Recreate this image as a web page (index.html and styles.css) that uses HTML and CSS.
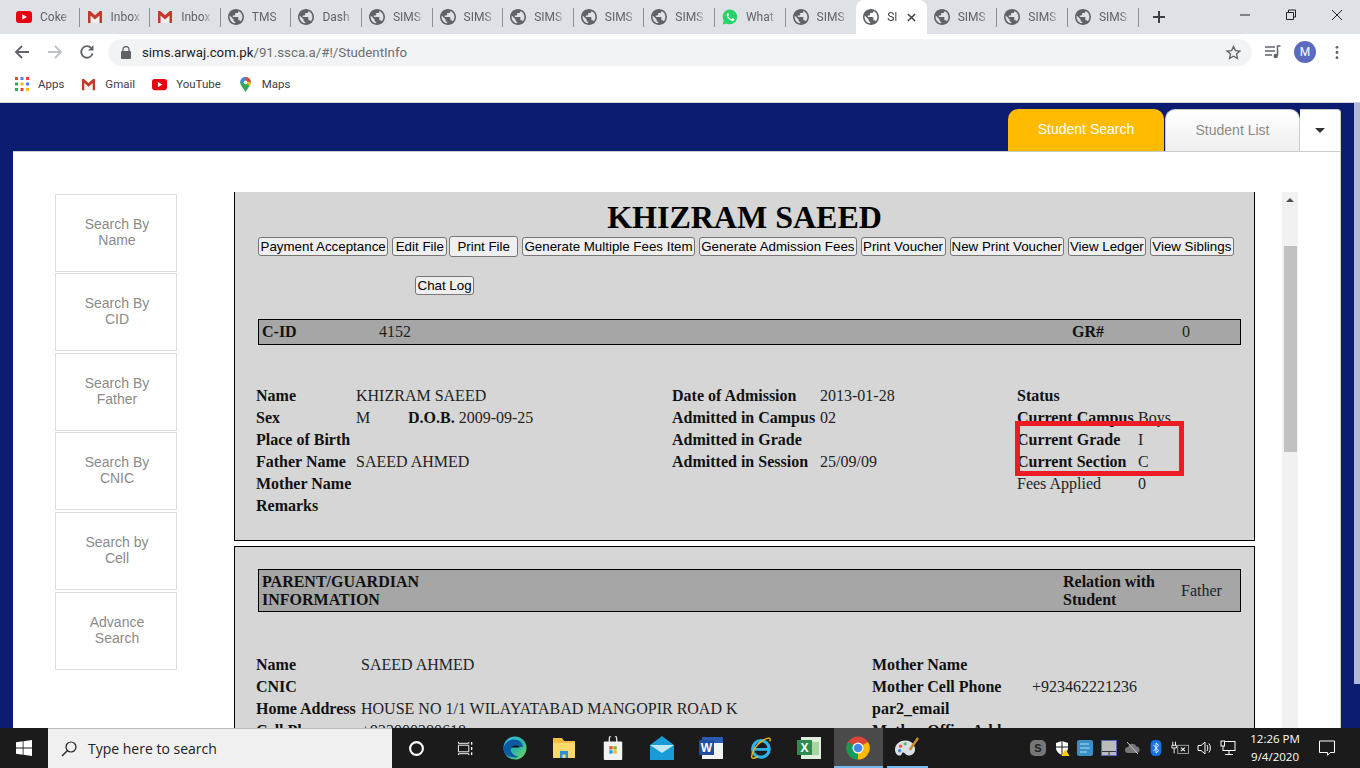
FILE: index.html
```html
<!DOCTYPE html>
<html lang="en">
<head>
<meta charset="utf-8">
<title>SIMS</title>
<link rel="stylesheet" href="styles.css">
</head>
<body>
<svg class="sprite" aria-hidden="true">
  <symbol id="globe" viewBox="2 2 20 20"><path fill="#5f6368" d="M12 2C6.48 2 2 6.48 2 12s4.48 10 10 10 10-4.48 10-10S17.52 2 12 2zm-1 17.93c-3.95-.49-7-3.85-7-7.93 0-.62.08-1.21.21-1.79L9 15v1c0 1.1.9 2 2 2v1.93zm6.9-2.54c-.26-.81-1-1.39-1.9-1.39h-1v-3c0-.55-.45-1-1-1H8v-2h2c.55 0 1-.45 1-1V7h2c1.1 0 2-.9 2-2v-.41c2.93 1.19 5 4.06 5 7.41 0 2.08-.8 3.97-2.1 5.39z"/></symbol>
  <symbol id="yt" viewBox="0 0 16 16"><rect x="0" y="2" width="16" height="12" rx="3" fill="#e60012"/><path d="M6.3 5.2v5.6L11 8z" fill="#fff"/></symbol>
  <symbol id="gmail" viewBox="0 0 16 16"><path d="M3.500 6.800V14h9V6.800L8 10.400z" fill="#f1f1f1"/><path d="M1 2h2.200L8 6.300 12.800 2H15v12h-2.500V6.400L8 10.400 3.500 6.400V14H1z" fill="#c5392b"/></symbol>
  <symbol id="wa" viewBox="0 0 16 16"><path d="M8 .6a7.300 7.300 0 0 0-6.300 11L.7 15.400l3.900-1A7.300 7.300 0 1 0 8 .6z" fill="#25d366"/><path d="M5.700 4c-.8.400-1.300 1.400-1 2.500.6 2.400 2.700 4.700 5.200 5.400 1.200.3 2.100-.3 2.400-1.200l-.1-.7-1.800-.9-.9 1c-1.500-.5-2.700-1.700-3.300-3.200l.8-.9L6.300 4z" fill="#fff"/></symbol>
</svg>

<header class="chrome">
  <div class="tabstrip">
    <div class="tab"><svg class="fav"><use href="#yt"/></svg><span class="tab-title">Coke</span></div>
    <div class="tab"><svg class="fav"><use href="#gmail"/></svg><span class="tab-title">Inbox</span></div>
    <div class="tab"><svg class="fav"><use href="#gmail"/></svg><span class="tab-title">Inbox</span></div>
    <div class="tab"><svg class="fav"><use href="#globe"/></svg><span class="tab-title">TMS</span></div>
    <div class="tab"><svg class="fav"><use href="#globe"/></svg><span class="tab-title">Dash</span></div>
    <div class="tab"><svg class="fav"><use href="#globe"/></svg><span class="tab-title">SIMS</span></div>
    <div class="tab"><svg class="fav"><use href="#globe"/></svg><span class="tab-title">SIMS</span></div>
    <div class="tab"><svg class="fav"><use href="#globe"/></svg><span class="tab-title">SIMS</span></div>
    <div class="tab"><svg class="fav"><use href="#globe"/></svg><span class="tab-title">SIMS</span></div>
    <div class="tab"><svg class="fav"><use href="#globe"/></svg><span class="tab-title">SIMS</span></div>
    <div class="tab"><svg class="fav"><use href="#wa"/></svg><span class="tab-title">What</span></div>
    <div class="tab no-sep"><svg class="fav"><use href="#globe"/></svg><span class="tab-title">SIMS</span></div>
    <div class="tab active"><svg class="fav"><use href="#globe"/></svg><span class="tab-title short">SI</span>
      <svg class="tab-x" viewBox="0 0 10 10"><path d="M1 1l8 8M9 1l-8 8" stroke="#3c4043" stroke-width="1.600"/></svg></div>
    <div class="tab"><svg class="fav"><use href="#globe"/></svg><span class="tab-title">SIMS</span></div>
    <div class="tab"><svg class="fav"><use href="#globe"/></svg><span class="tab-title">SIMS</span></div>
    <div class="tab"><svg class="fav"><use href="#globe"/></svg><span class="tab-title">SIMS</span></div>
    <svg class="newtab" viewBox="0 0 14 14"><path d="M7 1v12M1 7h12" stroke="#3c4043" stroke-width="2"/></svg>
    <div class="winctl">
      <svg viewBox="0 0 12 12"><path d="M1 6h10" stroke="#222" stroke-width="1"/></svg>
      <svg viewBox="0 0 12 12"><path d="M3.500 3V1h7v7H8.500M1.500 3.500h7v7h-7z" fill="none" stroke="#222" stroke-width="1"/></svg>
      <svg viewBox="0 0 12 12"><path d="M1 1l10 10M11 1L1 11" stroke="#222" stroke-width="1"/></svg>
    </div>
  </div>

  <div class="toolbar">
    <svg class="tb" viewBox="0 0 16 16"><path d="M15 8H2.500M8 2L2 8l6 6" fill="none" stroke="#5f6368" stroke-width="1.800"/></svg>
    <svg class="tb" viewBox="0 0 16 16"><path d="M1 8h12.500M8 2l6 6-6 6" fill="none" stroke="#bdc1c6" stroke-width="1.800"/></svg>
    <svg class="tb" viewBox="0 0 16 16"><path d="M13.600 9.500A5.800 5.800 0 1 1 12.300 4" fill="none" stroke="#5f6368" stroke-width="1.800"/><path d="M14.500 1v5.500H9z" fill="#5f6368"/></svg>
    <div class="omnibox">
      <svg class="lock" viewBox="0 0 10 13"><path d="M2 5V3.500a3 3 0 0 1 6 0V5" fill="none" stroke="#5f6368" stroke-width="1.300"/><rect y="5" width="10" height="8" rx="1" fill="#5f6368"/></svg>
      <span class="url"><span class="host">sims.arwaj.com.pk</span>/91.ssca.a/#!/StudentInfo</span>
      <svg class="star" viewBox="0 0 16 16"><path d="M8 1.500l2 4.400 4.800.5-3.600 3.200 1 4.700L8 11.900l-4.200 2.400 1-4.700L1.200 6.400 6 5.900z" fill="none" stroke="#5f6368" stroke-width="1.400"/></svg>
    </div>
    <svg class="media" viewBox="0 0 16 14"><path d="M0 2h10M0 6h10M0 10h7" stroke="#5f6368" stroke-width="1.400"/><path d="M12.500 1v9.500" stroke="#5f6368" stroke-width="1.500"/><path d="M12 1h3.500" stroke="#5f6368" stroke-width="1.500"/><circle cx="10.700" cy="11" r="2.200" fill="#5f6368"/></svg>
    <span class="avatar">M</span>
    <svg class="dots" viewBox="0 0 4 16"><circle cx="2" cy="2.500" r="1.500" fill="#5f6368"/><circle cx="2" cy="8" r="1.500" fill="#5f6368"/><circle cx="2" cy="13.500" r="1.500" fill="#5f6368"/></svg>
  </div>

  <nav class="bookmarks">
    <span class="bm apps-bm">
      <svg class="bm-ic" viewBox="0 0 14 14">
        <rect width="3" height="3" fill="#ea4335"/><rect x="5.500" width="3" height="3" fill="#4285f4"/><rect x="11" width="3" height="3" fill="#ea4335"/>
        <rect y="5.500" width="3" height="3" fill="#34a853"/><rect x="5.500" y="5.500" width="3" height="3" fill="#fbbc04"/><rect x="11" y="5.500" width="3" height="3" fill="#4285f4"/>
        <rect y="11" width="3" height="3" fill="#34a853"/><rect x="5.500" y="11" width="3" height="3" fill="#ea4335"/><rect x="11" y="11" width="3" height="3" fill="#fbbc04"/>
      </svg>Apps</span>
    <span class="bm"><svg class="bm-ic wide"><use href="#gmail"/></svg>Gmail</span>
    <span class="bm"><svg class="bm-ic wide"><use href="#yt"/></svg>YouTube</span>
    <span class="bm"><svg class="bm-ic wide" viewBox="0 0 16 16">
      <path d="M8 0a5.700 5.700 0 0 0-5.700 5.700c0 1.400.5 2.500 1.300 3.600L8 16l4.400-6.700c.8-1.100 1.300-2.200 1.300-3.600A5.700 5.700 0 0 0 8 0z" fill="#34a853"/>
      <path d="M3.600 1.900A5.700 5.700 0 0 1 8 0v4L5 6.700 2.500 5z" fill="#4285f4"/><path d="M8 0a5.700 5.700 0 0 1 5.700 5.700L8 4z" fill="#ea4335"/><path d="M13.700 5.700c0 1.400-.5 2.500-1.300 3.600L10 8V5z" fill="#fbbc04"/><circle cx="8" cy="5.700" r="2" fill="#fff"/></svg>Maps</span>
  </nav>
</header>

<main class="page">
  <div class="tabs">
    <a class="ptab ptab-on">Student Search</a>
    <a class="ptab ptab-off">Student List</a>
    <a class="ptab ptab-more"><span class="caret"></span></a>
  </div>
  <section class="panel">
    <aside class="side">
      <a class="side-btn">Search By<br>Name</a>
      <a class="side-btn">Search By<br>CID</a>
      <a class="side-btn">Search By<br>Father</a>
      <a class="side-btn">Search By<br>CNIC</a>
      <a class="side-btn">Search by<br>Cell</a>
      <a class="side-btn">Advance<br>Search</a>
    </aside>
    <div class="viewer">
      <div class="cards">
        <article class="card card-first">
          <h1 class="name">KHIZRAM SAEED</h1>
          <div class="actions">
            <button class="btn">Payment Acceptance</button>
            <button class="btn btn-wide">Edit File</button>
            <button class="btn btn-big">Print File</button>
            <button class="btn">Generate Multiple Fees Item</button>
            <button class="btn btn-tight">Generate Admission Fees</button>
            <button class="btn">Print Voucher</button>
            <button class="btn btn-tight">New Print Voucher</button>
            <button class="btn btn-tight">View Ledger</button>
            <button class="btn">View Siblings</button>
          </div>
          <div class="actions-2"><button class="btn">Chat Log</button></div>
          <div class="bar bar-id">
            <b class="c-a">C-ID</b><span class="c-b">4152</span><b class="c-c">GR#</b><span>0</span>
          </div>
          <div class="fields">
            <div class="fcol fcol-1">
              <b>Name</b><span>KHIZRAM SAEED</span>
              <b>Sex</b><span><span class="sex">M</span><b>D.O.B.</b> 2009-09-25</span>
              <b>Place of Birth</b><span></span>
              <b>Father Name</b><span>SAEED AHMED</span>
              <b>Mother Name</b><span></span>
              <b>Remarks</b><span></span>
            </div>
            <div class="fcol fcol-2">
              <b>Date of Admission</b><span>2013-01-28</span>
              <b>Admitted in Campus</b><span>02</span>
              <b>Admitted in Grade</b><span></span>
              <b>Admitted in Session</b><span>25/09/09</span>
            </div>
            <div class="fcol fcol-3">
              <b>Status</b><span></span>
              <b>Current Campus</b><span>Boys</span>
              <b>Current Grade</b><span>I</span>
              <b>Current Section</b><span>C</span>
              <span>Fees Applied</span><span>0</span>
            </div>
          </div>
          <div class="redbox"></div>
        </article>
        <article class="card card-second">
          <div class="bar bar-parent">
            <b class="p-a">PARENT/GUARDIAN<br>INFORMATION</b><b class="p-b">Relation with<br>Student</b><span>Father</span>
          </div>
          <div class="fields fields-p">
            <div class="fcol fcol-p1">
              <b>Name</b><span>SAEED AHMED</span>
              <b>CNIC</b><span></span>
              <b>Home Address</b><span>HOUSE NO 1/1 WILAYATABAD MANGOPIR ROAD K</span>
              <b>Cell Phone</b><span>+923000280618</span>
            </div>
            <div class="fcol fcol-p2">
              <b>Mother Name</b><span></span>
              <b>Mother Cell Phone</b><span>+923462221236</span>
              <b>par2_email</b><span></span>
              <b>Mother Office Add</b><span></span>
            </div>
          </div>
        </article>
      </div>
      <div class="vscroll"><span class="vs-up"></span><span class="vs-thumb"></span></div>
    </div>
  </section>
  <div class="pagescroll"></div>
</main>

<footer class="taskbar">
  <svg class="winlogo" viewBox="0 0 16 16"><path d="M0 2.300l6.700-1v6.200H0zM7.500 1.200L16 0v7.500H7.500zM0 8.400h6.700v6.300l-6.700-1zM7.500 8.400H16V16l-8.500-1.200z" fill="#fff"/></svg>
  <div class="searchbox">
    <svg class="mag" viewBox="0 0 16 16"><circle cx="10" cy="6" r="5" fill="none" stroke="#222" stroke-width="1.200"/><path d="M6.300 9.700L1 15" stroke="#222" stroke-width="1.400"/></svg>
    <span>Type here to search</span>
  </div>
  <div class="tb-apps">
    <span class="tapp"><svg viewBox="0 0 16 16"><circle cx="8" cy="8" r="6" fill="none" stroke="#fff" stroke-width="2"/></svg></span>
    <span class="tapp"><svg viewBox="0 0 18 16"><path d="M1.500 4.500h11v7h-11zM1.500 1v1.500h11V1M1.500 15v-1.500h11V15" fill="none" stroke="#fff"/><path d="M15.500 1v3M15.500 6.500v3M15.500 12v3" stroke="#fff" stroke-width="1.400"/></svg></span>
    <span class="tapp"><svg viewBox="0 0 24 24"><defs><linearGradient id="edge" x1="0" y1="0" x2="1" y2="1"><stop offset="0" stop-color="#35c1f1"/><stop offset=".55" stop-color="#2fb5a0"/><stop offset="1" stop-color="#7fdc5a"/></linearGradient></defs><circle cx="12" cy="12" r="11.500" fill="url(#edge)"/><path d="M.6 13C1 7 6 3.500 11 3.500c5 0 8.500 3 9 7.500H10c-2.500 0-3 3-1 6 1.500 2 4 3.500 7 3.500-1.200.7-2.700 1-4 1C5.500 21.500.6 18 .6 13z" fill="#0c59a4"/><path d="M8 14c0-3 2-4.500 5-4.500 2 0 3.500 1 3.500 2H10c-1 0-2 1-2 2.500z" fill="#111"/></svg></span>
    <span class="tapp"><svg viewBox="0 0 24 22"><path d="M1 1h9l2 3h11v17H1z" fill="#f4c042"/><rect x="1" y="6" width="22" height="15" fill="#fbd96b"/><path d="M8 21v-7h8v7h-2.500v-3.500h-3V21z" fill="#2a8fd8"/></svg></span>
    <span class="tapp"><svg viewBox="0 0 22 26"><path d="M7 7V3a4 4 0 0 1 8 0v4" fill="none" stroke="#ddd" stroke-width="1.500"/><rect x="1" y="6" width="20" height="20" rx="1" fill="#f3f3f3"/><rect x="7" y="11" width="3.600" height="3.600" fill="#e8512a"/><rect x="11.400" y="11" width="3.600" height="3.600" fill="#7db928"/><rect x="7" y="15.400" width="3.600" height="3.600" fill="#12a5ea"/><rect x="11.400" y="15.400" width="3.600" height="3.600" fill="#fdb813"/></svg></span>
    <span class="tapp"><svg viewBox="0 0 24 24"><path d="M0 9l12-9 12 9v15H0z" fill="#1a9ad6"/><path d="M0 9h24L12 17z" fill="#bfe8f8"/></svg></span>
    <span class="tapp"><svg viewBox="0 0 24 24"><rect x="3" y="1" width="21" height="22" fill="#f2f2f2"/><rect x="3" y="1" width="21" height="6" fill="#2a5bb0"/><rect x="0" y="4" width="15" height="15" fill="#1f4e9e"/><text x="7.500" y="16" class="office-l">W</text></svg></span>
    <span class="tapp"><svg viewBox="0 0 24 26"><circle cx="13" cy="14" r="9" fill="none" stroke="#2bb3ea" stroke-width="3.500"/><path d="M5 14.500h17" stroke="#2bb3ea" stroke-width="3"/><path d="M22 2C14 3 4 13 3 22c-.3 3 3 2.500 7 0M19 3c3-1.500 5-.5 3.500 3" fill="none" stroke="#f2b705" stroke-width="1.500"/></svg></span>
    <span class="tapp"><svg viewBox="0 0 24 24"><rect x="4" y="1" width="20" height="22" fill="#dfeedd"/><rect x="14" y="6" width="8" height="13" fill="#a8d5a2"/><rect x="0" y="4" width="15" height="15" fill="#2d8c4e"/><text x="7.500" y="16" class="office-l">X</text></svg></span>
    <span class="tapp tapp-on"><svg viewBox="0 0 24 24"><circle cx="12" cy="12" r="11.500" fill="#db4437"/><path d="M12 12L22 18A11.500 11.500 0 0 1 12 23.500z" fill="#fbbc04"/><path d="M12 12l10-6a11.500 11.500 0 0 1 0 12z" fill="#fbbc04"/><path d="M12 12L12 23.500A11.500 11.500 0 0 1 2 18z" fill="#0f9d58"/><path d="M12 12L2 18A11.500 11.500 0 0 1 2 6z" fill="#0f9d58"/><circle cx="12" cy="12" r="5.500" fill="#fff"/><circle cx="12" cy="12" r="4.300" fill="#4285f4"/></svg></span>
    <span class="tapp tapp-run"><svg viewBox="0 0 26 24"><path d="M11 4C4 4 0 9 0 14c0 5 4 7 6 6 2-1 1-3 3-3s3 4 7 3c5-1 7-6 5-10-1.500-4-5-6-10-6z" fill="#d9dfe6"/><circle cx="6" cy="10" r="1.800" fill="#e2574c"/><circle cx="11" cy="7.500" r="1.800" fill="#5cb85c"/><circle cx="5" cy="15" r="1.800" fill="#3d8fd1"/><path d="M24 0l-9 13 2 2L26 2z" fill="#c98a2e"/></svg></span>
  </div>
  <div class="tray">
    <span class="tr tr-s">S</span>
    <svg class="tr" viewBox="0 0 16 16"><path d="M8 1l6 2v5c0 3-3 6-6 7-3-1-6-4-6-7V3z" fill="#fff"/><path d="M8 1v14M2 7h12" stroke="#1a1a1a"/><path d="M11.500 9l4 7h-8z" fill="#fc0"/></svg>
    <svg class="tr" viewBox="0 0 16 16"><rect width="16" height="16" rx="2" fill="#3a8fc4"/><path d="M3 4h9M3 8h10M3 12h7" stroke="#a8e0f5"/></svg>
    <svg class="tr" viewBox="0 0 16 16"><rect x=".5" y=".5" width="15" height="15" fill="#bbb" stroke="#5568b8"/><path d="M1 11.500h14M8 11.500V15" stroke="#334"/></svg>
    <svg class="tr" viewBox="0 0 16 12"><path d="M4 11a3 3 0 0 1 0-6 4.500 4.500 0 0 1 8.500-.5A3.300 3.300 0 0 1 13 11z" fill="#777"/><path d="M3 0l11 12" stroke="#ccc"/></svg>
    <svg class="tr" viewBox="0 0 12 18"><rect width="12" height="18" rx="5" fill="#1a73e8"/><path d="M3 5.500l6 6.500-3 2.500V3.500l3 2.500-6 6.500" fill="none" stroke="#fff"/></svg>
    <svg class="tr tr-w" viewBox="0 0 20 16"><path d="M2 1v4M5 1v4M1 5h5v3H1zM3.500 8v6" stroke="#fff" fill="none"/><rect x="7.500" y="5" width="12" height="9" fill="none" stroke="#aaa"/><path d="M11 7.500l4.500 4M15.500 7.500l-4.500 4" stroke="#fff" stroke-width="1.200"/></svg>
    <svg class="tr" viewBox="0 0 16 16"><path d="M1 5.500h3L8 2v12L4 10.500H1z" fill="none" stroke="#fff"/><path d="M10 5c1 1.500 1 4.500 0 6M12 3.500c1.800 2.500 1.800 6.500 0 9" fill="none" stroke="#fff"/></svg>
    <svg class="tr" viewBox="0 0 16 16"><rect x="3" y="1.500" width="12" height="9" fill="none" stroke="#fff"/><path d="M9 10.500V14M5 14.500h8" stroke="#fff"/><rect x="1" y="1" width="3.500" height="5" fill="#1a1a1a" stroke="#fff"/></svg>
  </div>
  <div class="clock"><span>12:26 PM</span><span>9/4/2020</span></div>
  <svg class="notif" viewBox="0 0 16 16"><path d="M.5 1h15v11.500h-4.300L8.500 15.300V12.500H.5z" fill="none" stroke="#fff"/></svg>
</footer>
</body>
</html>
```

FILE: styles.css
```css
* { box-sizing: border-box; }
html, body { height: 100%; }
body {
  margin: 0;
  height: 768px;
  overflow: hidden;
  display: flex;
  flex-direction: column;
  font-family: "Liberation Serif", serif;
  background: #0c1c70;
}
.sprite { display: none; }

/* Browser chrome */
.chrome { flex: none; font-family: Roboto, "Open Sans", sans-serif; background: #fff; }
.tabstrip { height: 34px; background: #dee1e6; display: flex; align-items: stretch; padding-left: 9px; }
.tab {
  width: 70.6px; flex: none;
  display: flex; align-items: center;
  padding-left: 7px;
  gap: 8px;
  position: relative;
  font-size: 12px; color: #5f6368;
}
.tab::after { content: ""; position: absolute; right: 0; top: 8px; height: 19px; width: 1px; background: #8f9296; }
.tab.no-sep::after, .tab.active::after { display: none; }
.tab.active { background: #fff; border-radius: 8px 8px 0 0; color: #3c4043; }
.fav { width: 16px; height: 16px; flex: none; }
.tab-title {
  width: 31px; white-space: nowrap; overflow: hidden;
  -webkit-mask-image: linear-gradient(90deg, #000 70%, transparent 100%);
  mask-image: linear-gradient(90deg, #000 70%, transparent 100%);
}
.tab-title.short { width: 12px; }
.tab-x { width: 9px; height: 9px; margin-left: 0; flex: none; }
.newtab { width: 14px; height: 14px; align-self: center; margin-left: 13px; flex: none; }
.winctl { margin-left: auto; display: flex; align-items: center; padding-right: 17px; gap: 34px; padding-bottom: 4px; }
.winctl svg { width: 12px; height: 12px; }

.toolbar { height: 34px; display: flex; align-items: center; padding: 2px 14px 0 14px; background: #fff; }
.tb { width: 16px; height: 16px; flex: none; margin-right: 17px; }
.tb:nth-child(3) { margin-left: -1px; margin-right: 15px; }
.omnibox {
  margin-left: -2px;
  width: 1144px; height: 27px; flex: none;
  background: #f1f3f4; border-radius: 14px;
  display: flex; align-items: center; padding-left: 13px;
  font-size: 13.250px; color: #6b6f73;
}
.lock { width: 10px; height: 13px; margin-right: 11px; flex: none; }
.url { white-space: nowrap; flex: 1; }
.host { color: #202124; }
.star { width: 15px; height: 15px; margin-right: 11px; flex: none; }
.media { width: 16px; height: 14px; margin-left: 13px; flex: none; }
.avatar {
  width: 22px; height: 22px; border-radius: 50%; background: #5c6bc0; color: #fff;
  font-size: 12px; display: flex; align-items: center; justify-content: center; margin-left: 13px; flex: none;
}
.dots { width: 4px; height: 15px; margin-left: 19px; flex: none; }

.bookmarks {
  height: 35px; display: flex; align-items: center; padding: 0 0 2px 15px;
  font-size: 11.500px; color: #3c4043; background: #fff; border-bottom: 1px solid #d0d2d5;
}
.bm { display: flex; align-items: center; gap: 9px; margin-right: 17px; }
.bm-ic { width: 14px; height: 14px; flex: none; }
.bm-ic.wide { width: 15px; height: 15px; }

/* Page */
.page { flex: 1; min-height: 0; position: relative; display: flex; flex-direction: column; padding: 6px 19px 0 13px; background: #0c1c70; }
.tabs { flex: none; height: 42px; display: flex; justify-content: flex-end; font: 14px "Liberation Sans", sans-serif; }
.ptab { display: flex; align-items: center; justify-content: center; height: 42px; }
.ptab-on { width: 156px; background: #ffbb00; color: #fff; border-radius: 10px 10px 0 0; margin-right: 1px; padding-bottom: 3px; }
.ptab-off { width: 135px; background: linear-gradient(#fff, #efefef); color: #8a8a8a; border: 1px solid #ccc; border-bottom: 0; border-radius: 10px 10px 0 0; padding-bottom: 2px; }
.ptab-more { width: 41px; background: #fff; border: 1px solid #ccc; border-bottom: 0; border-left: 0; border-radius: 0 4px 0 0; }
.caret { width: 0; height: 0; border: 5px solid transparent; border-top: 5px solid #333; border-bottom: 0; }
.panel { flex: 1; min-height: 0; background: #fff; border-top: 1px solid #ccc; border-right: 1px solid #ccc; display: flex; padding: 40px 0 0 42px; overflow: hidden; }
.side { width: 122px; flex: none; margin-top: 1.800px; display: flex; flex-direction: column; gap: 1.550px; }
.side-btn {
  height: 78px; border: 1px solid #ddd; padding: 0 0 2px 2px;
  display: flex; align-items: center; justify-content: center; text-align: center;
  font: 14px/16px "Liberation Sans", sans-serif; color: #8a8a8a;
}
.viewer { display: flex; margin-left: 57px; width: 1064px; flex: none; height: 600px; }
.cards { width: 1021px; flex: none; display: flex; flex-direction: column; gap: 5px; }
.card { background: #d6d6d6; border: 1px solid #000; position: relative; flex: none; }
.card-first { height: 349px; border-top: 0; padding-left: 23px; }
.card-second { height: 300px; padding-left: 23px; }
.name { margin: 0 0 0 -23px; padding-top: 7px; height: 44px; font-size: 32px; line-height: 36px; text-align: center; color: #000; width: 1019px; }
.actions { display: flex; gap: 4px; align-items: center; height: 21px; }
.btn {
  font: 13.333px/17px "Liberation Sans", sans-serif; color: #000;
  background: #efefef; border: 1px solid #767676; border-radius: 3px;
  padding: 0 1.500px; height: 19px; white-space: nowrap;
}
.btn-tight { padding: 0 1px; }
.btn-wide { padding: 0 2.500px; }
.btn-big { height: 21px; padding: 0 7px; margin: 0 0 0 -2px; }
.actions-2 { padding: 19px 0 0 157px; height: 62px; }
.bar { background: #a6a6a6; border: 1px solid #000; width: 983px; display: flex; align-items: center; font-size: 16px; color: #222; padding-left: 3px; }
.bar b { color: #111; }
.bar-id { height: 26px; }
.c-a { width: 117px; }
.c-b { width: 693px; }
.c-c { width: 110px; }
.card-second .bar { margin-top: 22px; height: 43px; line-height: 18px; }
.p-a { width: 801px; }
.p-b { width: 118px; }
.fields { display: flex; margin-left: -2px; margin-top: 40px; font-size: 16px; color: #222; }
.fields b { color: #111; }
.fcol { display: grid; grid-auto-rows: 22px; align-content: start; white-space: nowrap; line-height: 22px; }
.fcol-1 { width: 416px; grid-template-columns: 100px 1fr; }
.fcol-2 { width: 345px; grid-template-columns: 148px 1fr; }
.fcol-3 { grid-template-columns: 121px 1fr; }
.sex { display: inline-block; width: 52px; }
.fields-p { margin-top: 42px; }
.fcol-p1 { width: 616px; grid-template-columns: 105px 1fr; }
.fcol-p2 { grid-template-columns: 160px 1fr; }
.redbox { position: absolute; left: 780px; top: 229px; width: 169px; height: 55px; border: 5px solid #ed1c24; }
.vscroll { margin-left: 27px; width: 16px; flex: none; background: #f1f1f1; position: relative; }
.vs-up { position: absolute; left: 4px; top: 6px; width: 0; height: 0; border: 4px solid transparent; border-bottom: 4px solid #505050; border-top: 0; }
.vs-thumb { position: absolute; left: 2px; top: 54px; width: 13px; height: 206px; background: #c1c1c1; }
.pagescroll { position: absolute; right: 0; top: 0; width: 6px; height: 581px; background: #b3b9d3; }

/* Taskbar */
.taskbar {
  flex: none; height: 40px; background: #1b1b1b; display: flex; align-items: center;
  font-family: "Open Sans", "Noto Sans", sans-serif; position: relative;
}
.winlogo { width: 16px; height: 16px; margin: 0 16px; flex: none; }
.searchbox {
  width: 344px; height: 40px; flex: none; background: #f0f0f0; display: flex; align-items: center; gap: 11px; padding-left: 13px;
  font-size: 14px; color: #222; border-top: 1px solid #bbb;
}
.mag { width: 16px; height: 16px; flex: none; }
.tb-apps { display: flex; margin-left: 0; height: 40px; }
.tapp { width: 49.100px; flex: none; height: 40px; display: flex; align-items: center; justify-content: center; position: relative; }
.tapp svg { width: 24px; height: 24px; }
.tapp:nth-child(1) svg, .tapp:nth-child(2) svg { width: 17px; height: 17px; }
.tapp-on { background: #4a4a4a; }
.tapp-on::after, .tapp-run::after { content: ""; position: absolute; bottom: 0; height: 2px; left: 0; right: 0; background: #76b9ed; }
.tapp-run::after { left: 4px; right: 4px; }
.office-l { font: bold 12px "Liberation Sans", sans-serif; fill: #fff; text-anchor: middle; }
.tray { display: flex; align-items: center; gap: 7.500px; margin-left: 98px; }
.tr { width: 16px; height: 16px; flex: none; }
.tr-w { width: 18px; }
.tr-s { border-radius: 5px; background: #777; color: #222; font: bold 11px/16px "Liberation Sans", sans-serif; text-align: center; }
.clock { width: 74px; margin-left: 2px; display: flex; flex-direction: column; align-items: center; font-size: 11.500px; line-height: 18px; color: #fff; flex: none; }
.notif { width: 16px; height: 16px; margin-left: 7px; flex: none; }
```
